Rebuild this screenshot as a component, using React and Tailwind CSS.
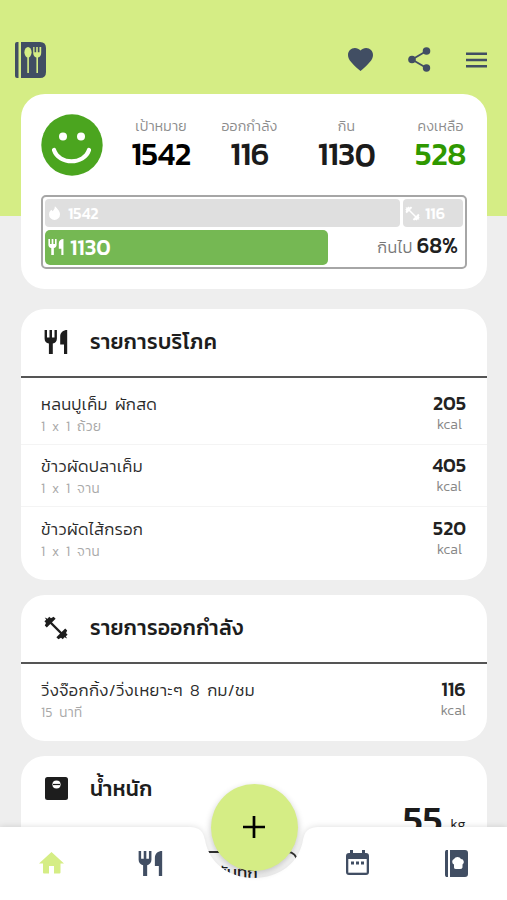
import React from "react";

function Utensils({ className }) {
  return (
    <svg viewBox="0 0 24 24" className={className} fill="currentColor">
      <path d="M0.6 0H3V7.5H5.5V0H8V7.5H10.5V0H12.9V8.5C12.9 11.5 11.2 13 8.8 13.6V24H4.9V13.6C2.2 13 0.6 11.5 0.6 8.5Z" />
      <path d="M23.2 0V24H20V14.5H16.2V6.5C16.2 2.5 19.2 0 23.2 0Z" />
    </svg>
  );
}

function Dumbbell({ className }) {
  return (
    <svg viewBox="0 0 24 24" className={className} fill="currentColor">
      <path d="M6 6L18 18" fill="none" stroke="currentColor" strokeWidth="2.4" />
      <path d="M0.8 1.6L3.6 2.8L5.2 0.8L7 2.2L9.6 0.8L11.6 2.8L2.8 11.6L0.8 9.6L2 7L0.4 5.2L2.2 3.8Z" />
      <path d="M23.2 22.4L20.4 21.2L18.8 23.2L17 21.8L14.4 23.2L12.4 21.2L21.2 12.4L23.2 14.4L22 17L23.6 18.8L21.8 20.2Z" />
    </svg>
  );
}

function RecipeBook() {
  return (
    <svg viewBox="0 0 31 36" className="h-9 w-[31px]">
      <path d="M0 2Q0 0 2 0H3.5V36H2Q0 36 0 34ZM6 0H25Q31 0 31 6V30Q31 36 25 36H6Z" fill="#414e63" />
      <g fill="#d5ed85">
        <ellipse cx="13" cy="10.3" rx="3.6" ry="5.3" />
        <path d="M12.3 14H13.9V31H12.3ZM18.2 5H19.5V10.2H21.2V5H22.8V10.2H24.5V5H26.2V11Q26 15 23 15.4V31H21.4V15.4Q18.4 15 18.2 11Z" />
      </g>
    </svg>
  );
}

function Stat({ label, value, width, color }) {
  return (
    <div className={`flex flex-col items-center whitespace-nowrap ${width}`}>
      <span className="h-[18px] text-[14px] leading-[21px] font-light tracking-[0.2px] text-[#8c8c8c]">{label}</span>
      <span className={`mt-1 text-[32px] leading-[32px] font-medium tracking-[-0.4px] ${color}`}>{value}</span>
    </div>
  );
}

function SectionHead({ icon, title }) {
  return (
    <div className="flex h-[69px] shrink-0 items-center border-b-2 border-[#555] pl-[23px] text-[#1d1d1d]">
      {icon}
      <h2 className="ml-[22px] pb-[2px] text-[21px] leading-none font-medium tracking-[0.38px] whitespace-nowrap">{title}</h2>
    </div>
  );
}

function Entry({ name, detail, kcal, last }) {
  return (
    <div className={`flex h-[62px] items-center justify-between pr-[21px] pl-5 ${last ? "" : "border-b border-[#f4f4f4]"}`}>
      <div className="pt-[2px] whitespace-nowrap">
        <div className="text-[16.5px] leading-[24px] font-light tracking-[0.35px] text-[#2a2a2a] [word-spacing:3px]">{name}</div>
        <div className="text-[13.5px] leading-[19px] font-light tracking-[0.4px] text-[#a8a8a8] [word-spacing:3px]">{detail}</div>
      </div>
      <div className="flex flex-col items-center">
        <div className="text-[19.5px] leading-[22px] font-medium text-[#222]">{kcal}</div>
        <div className="text-[14px] leading-[19px] font-light tracking-[0.3px] text-[#888]">kcal</div>
      </div>
    </div>
  );
}

export default function App() {
  return (
    <div className="relative h-[900px] w-[507px] overflow-hidden bg-[linear-gradient(#d5ed85_216px,#eeeeee_216px)] font-['Kanit','Prompt','Noto_Sans_Thai','Noto_Sans',sans-serif]">
      <header className="flex h-[94px] items-center justify-between pt-[25px] pr-5 pl-[15px]">
        <RecipeBook />
        <div className="flex items-center text-[#414e63]">
          <svg viewBox="0 0 25 23" className="h-[23px] w-[25px]" fill="currentColor">
            <path d="M12.5 23L10.7 21.4C4.2 15.5 0 11.7 0 6.9C0 3 3 0 6.9 0C9 0 11.1 1 12.5 2.6C13.9 1 16 0 18.1 0C22 0 25 3 25 6.9C25 11.7 20.8 15.5 14.3 21.4Z" />
          </svg>
          <svg viewBox="0 0 23 25" className="ml-[35px] h-[25px] w-[23px]" fill="currentColor">
            <path d="M4 12.5L18.5 4M4 12.5L18.5 21" stroke="currentColor" strokeWidth="1.9" />
            <circle cx="4" cy="12.5" r="3.8" /><circle cx="18.5" cy="4" r="3.8" /><circle cx="18.5" cy="21" r="3.7" />
          </svg>
          <svg viewBox="0 0 21 16" className="ml-[35px] h-4 w-[21px]" fill="currentColor">
            <path d="M0 .5H21V3H0ZM0 6.7H21V9.2H0ZM0 13H21V15.5H0Z" />
          </svg>
        </div>
      </header>

      <main className="flex flex-col pr-5 pl-[21px]">
        <section className="h-[195px] rounded-[24px] bg-white px-5 pt-5">
          <div className="flex h-[62px]">
            <svg viewBox="0 0 62 62" className="size-[62px] shrink-0">
              <circle cx="31" cy="31" r="30.7" fill="#4ba51f" />
              <circle cx="22" cy="22.5" r="4" fill="#fff" /><circle cx="40" cy="22.5" r="4" fill="#fff" />
              <path d="M13 36C18 51 43 51 48 36" fill="none" stroke="#fff" strokeWidth="4.2" strokeLinecap="round" />
            </svg>
            <div className="ml-[17px] flex shrink-0 pt-[2px]">
              <Stat label="เป้าหมาย" value="1542" width="w-[82px]" color="text-black" />
              <Stat label="ออกกำลัง" value="116" width="w-[95px]" color="text-[#1b1b1b]" />
              <Stat label="กิน" value="1130" width="w-[99px]" color="text-[#1b1b1b]" />
              <Stat label="คงเหลือ" value="528" width="w-[89px]" color="text-[#2f9800]" />
            </div>
          </div>
          <div className="mt-[19px] flex h-[74px] w-[426px] flex-col gap-[3px] rounded-[5px] border-2 border-[#a6a6a6] p-[2px]">
            <div className="flex h-[28px] gap-[3px] text-[16px] font-medium text-white">
              <div className="flex w-[355px] items-center rounded-[4px] bg-[#dfdfdf] pl-[4px]">
                <svg viewBox="0 0 12 15" className="h-[14px] w-[11px]" fill="currentColor"><path d="M6.5 0Q12 5 12 9A6 6 0 0 1 0 9Q0 6 2.5 4L4 5.5Q6.5 3 6.5 0Z" /></svg>
                <span className="ml-[8px]">1542</span>
              </div>
              <div className="flex flex-1 items-center rounded-[4px] bg-[#dfdfdf] pl-[2px]">
                <Dumbbell className="size-[15px]" /><span className="ml-[5px]">116</span>
              </div>
            </div>
            <div className="flex h-[35px] items-center">
              <div className="flex h-full w-[283px] items-center rounded-[5px] bg-[#75b853] pl-[3px] text-white">
                <Utensils className="mb-[2px] size-4" /><span className="ml-[6px] text-[22px] font-medium">1130</span>
              </div>
              <div className="flex flex-1 items-baseline justify-end pr-[5px] pb-[5px] whitespace-nowrap">
                <span className="text-[16px] font-light tracking-[0.4px] text-[#777]">กินไป</span><span className="ml-1 text-[21.5px] font-medium text-[#202020]">68%</span>
              </div>
            </div>
          </div>
        </section>

        <section className="mt-5 h-[271px] rounded-[24px] bg-white">
          <SectionHead icon={<Utensils className="mb-[2px] size-6" />} title="รายการบริโภค" />
          <div className="pt-[5px]">
            <Entry name="หลนปูเค็ม ผักสด" detail="1 x 1 ถ้วย" kcal="205" />
            <Entry name="ข้าวผัดปลาเค็ม" detail="1 x 1 จาน" kcal="405" />
            <Entry name="ข้าวผัดไส้กรอก" detail="1 x 1 จาน" kcal="520" last />
          </div>
        </section>

        <section className="mt-[15px] h-[146px] rounded-[24px] bg-white">
          <SectionHead icon={<Dumbbell className="mb-[2px] size-6" />} title="รายการออกกำลัง" />
          <div className="pt-[4px]">
            <Entry name="วิ่งจ๊อกกิ้ง/วิ่งเหยาะๆ 8 กม/ชม" detail="15 นาที" kcal="116" last />
          </div>
        </section>

        <section className="mt-[15px] h-[200px] rounded-[24px] bg-white">
          <div className="flex h-[46px] items-end pl-6 text-[#1d1d1d]">
            <svg viewBox="0 0 23 23" className="mb-[2px] size-[23px]">
              <rect width="23" height="23" rx="2.5" fill="#1d1d1d" /><circle cx="11.5" cy="7.5" r="4.1" fill="#fff" /><path d="M8 7.5H15" stroke="#1d1d1d" strokeWidth="1.2" />
            </svg>
            <h2 className="ml-[22px] text-[21px] leading-[26px] font-medium tracking-[0.35px]">น้ำหนัก</h2>
          </div>
          <div className="flex h-[32px] items-start justify-end pr-[21px] text-[#1b1b1b]">
            <span className="pt-[2px] text-[38px] leading-[32px] font-medium">55</span><span className="ml-2 pt-[12px] text-[14px] leading-[22px] font-light tracking-[0.5px]">kg</span>
          </div>
          <div className="mt-[17px] ml-[155px] flex h-[44px] w-[122px] items-center justify-center rounded-[10px] border-2 border-[#333] text-[17px] text-[#222]">บันทึก</div>
        </section>
      </main>

      <nav className="absolute inset-x-0 bottom-0 h-[88px]">
        <svg viewBox="0 0 507 88" className="absolute inset-0 h-[88px] w-[507px] overflow-visible">
          <path d="M0 15H188C201 15 203 20 205 28C209 51 229 66 254 66C279 66 299 51 303 28C305 20 307 15 320 15H507V88H0Z" fill="#fff" className="drop-shadow-[0_0_3px_rgba(0,0,0,0.14)]" />
        </svg>
        <div className="relative flex h-full items-center pr-[38px] pl-[39px] pt-[14px] text-[#414e63]">
          <svg viewBox="0 0 25 22" className="h-[22px] w-[25px]" fill="#d5ed85"><path d="M12.5 0L25 11.5H21.5V20.5Q21.5 21.5 20.5 21.5H15V14H10V21.5H5Q4 21.5 4 20.5V11.5H0Z" /></svg>
          <Utensils className="ml-[74px] h-[25px] w-[25px]" />
          <svg viewBox="0 0 23 26" className="ml-[183px] h-[26px] w-[23px]">
            <path d="M4 0H7V3H16V0H19V3H20Q23 3 23 6V22Q23 25 20 25H3Q0 25 0 22V6Q0 3 3 3H4Z" fill="currentColor" /><path d="M2.3 9H20.7V22.7H2.3Z" fill="#fff" />
            <path d="M5 11.5H8V14.5H5ZM10 11.5H13V14.5H10ZM15 11.5H18V14.5H15Z" fill="currentColor" />
          </svg>
          <svg viewBox="0 0 24 27" className="ml-[76px] h-[27px] w-6">
            <path d="M1 0H3V27H1Q0 26 0 25V2Q0 1 1 0ZM5 0H20Q23 0 23 3V24Q23 27 20 27H5Z" fill="currentColor" />
            <path d="M9 17.5V14.5A3 3 0 0 1 9 9A4 4 0 0 1 16 9A3 3 0 0 1 17.5 14.5V17.5Q17 19 15 19H11Q9 19 9 17.5Z" fill="#fff" />
          </svg>
        </div>
        <button className="absolute top-[-28px] left-[210.5px] flex size-[87px] items-center justify-center rounded-full bg-[#d5ed85] shadow-[0_3px_7px_rgba(0,0,0,0.24)]">
          <svg viewBox="0 0 22 22" className="size-[22px] -translate-y-px"><path d="M11 0V22M0 11H22" stroke="#000" strokeWidth="2.7" /></svg>
        </button>
      </nav>
    </div>
  );
}
